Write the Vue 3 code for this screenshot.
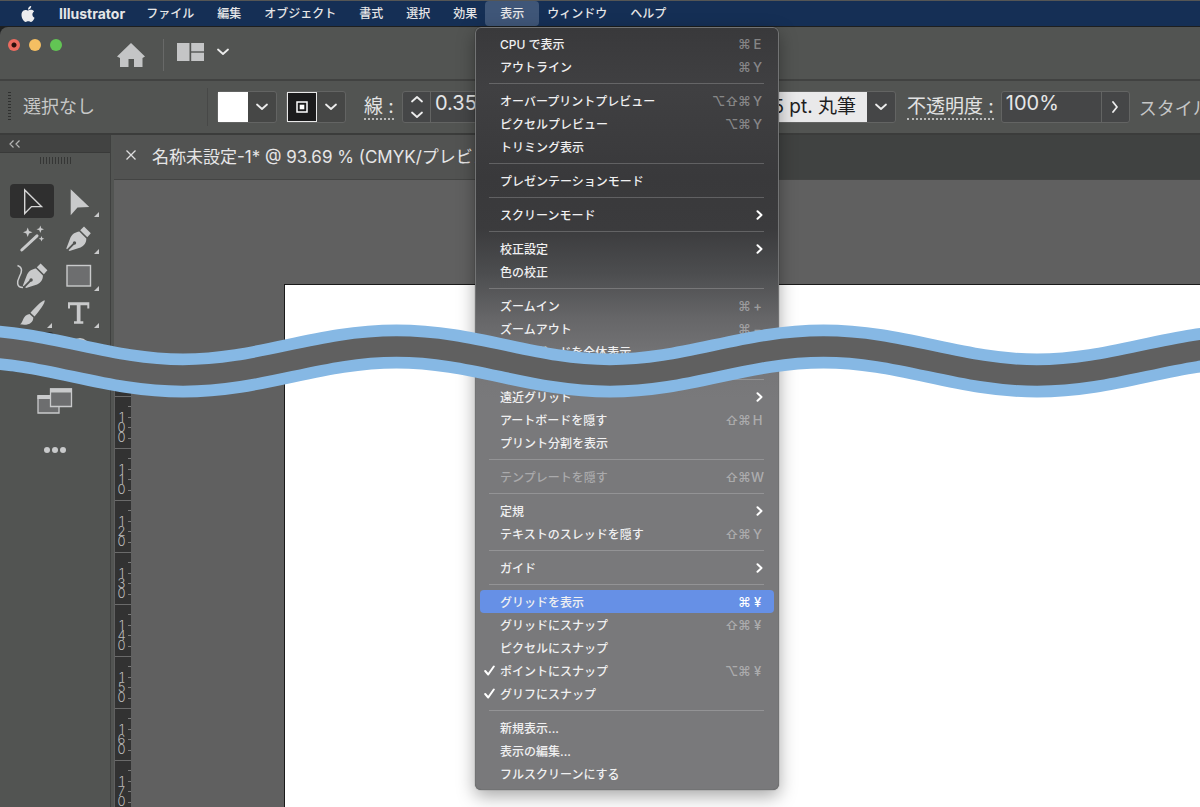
<script setup>
import { ref } from 'vue'

const menus = ['ファイル', '編集', 'オブジェクト', '書式', '選択', '効果', '表示', 'ウィンドウ', 'ヘルプ']

const groups = [
  [
    { label: 'CPU で表示', keys: '⌘E' },
    { label: 'アウトライン', keys: '⌘Y' },
  ],
  [
    { label: 'オーバープリントプレビュー', keys: '⌥⇧⌘Y' },
    { label: 'ピクセルプレビュー', keys: '⌥⌘Y' },
    { label: 'トリミング表示' },
  ],
  [{ label: 'プレゼンテーションモード' }],
  [{ label: 'スクリーンモード', sub: true }],
  [{ label: '校正設定', sub: true }, { label: '色の校正' }],
  [
    { label: 'ズームイン', keys: '⌘+' },
    { label: 'ズームアウト', keys: '⌘−' },
    { label: 'アートボードを全体表示', cut: true },
  ],
  [
    { label: '遠近グリッド', sub: true },
    { label: 'アートボードを隠す', keys: '⇧⌘H' },
    { label: 'プリント分割を表示' },
  ],
  [{ label: 'テンプレートを隠す', keys: '⇧⌘W', disabled: true }],
  [
    { label: '定規', sub: true },
    { label: 'テキストのスレッドを隠す', keys: '⇧⌘Y' },
  ],
  [{ label: 'ガイド', sub: true }],
  [
    { label: 'グリッドを表示', keys: '⌘¥', active: true },
    { label: 'グリッドにスナップ', keys: '⇧⌘¥' },
    { label: 'ピクセルにスナップ' },
    { label: 'ポイントにスナップ', keys: '⌥⌘¥', checked: true },
    { label: 'グリフにスナップ', checked: true },
  ],
  [{ label: '新規表示...' }, { label: '表示の編集...' }, { label: 'フルスクリーンにする' }],
]

const rulerMarks = ['100', '110', '120', '130', '140', '150', '160', '170']
const strokeWidth = ref('0.353 mm')
const opacity = ref('100%')
</script>

<template>
  <div class="app">
    <nav class="menubar" aria-label="メニューバー">
      <svg class="apple" viewBox="0 0 24 24" aria-hidden="true">
        <path d="M12.152 6.896c-.948 0-2.415-1.078-3.96-1.04-2.04.027-3.91 1.183-4.961 3.014-2.117 3.675-.546 9.103 1.519 12.09 1.013 1.454 2.208 3.09 3.792 3.039 1.52-.065 2.09-.987 3.935-.987 1.831 0 2.35.987 3.96.948 1.637-.026 2.676-1.48 3.676-2.948 1.156-1.688 1.636-3.325 1.662-3.415-.039-.013-3.182-1.221-3.22-4.857-.026-3.04 2.48-4.494 2.597-4.559-1.429-2.09-3.623-2.324-4.39-2.376-2-.156-3.675 1.09-4.61 1.09zM15.53 3.83c.843-1.012 1.4-2.427 1.245-3.83-1.207.052-2.662.805-3.532 1.818-.78.896-1.454 2.338-1.273 3.714 1.338.104 2.715-.688 3.559-1.701" />
      </svg>
      <button class="top-item app-name">Illustrator</button>
      <button v-for="m in menus" :key="m" class="top-item" :class="{ open: m === '表示' }">{{ m }}</button>
    </nav>

    <div class="window">
      <header class="titlebar">
        <div class="lights">
          <button class="light red" aria-label="閉じる"></button>
          <button class="light yellow" aria-label="しまう"></button>
          <button class="light green" aria-label="拡大"></button>
        </div>
        <button class="icon-btn home" aria-label="ホーム">
          <svg width="28" height="24" viewBox="0 0 28 24">
            <path fill="#c4c5c6" d="M14 0 28 13.500 25.500 15 25.500 24H17V16H11.500V24H3V15L0 13.500Z" />
          </svg>
        </button>
        <span class="title-rule"></span>
        <button class="icon-btn layout" aria-label="ワークスペース">
          <svg width="27" height="18" viewBox="0 0 27 18" fill="#c4c5c6">
            <rect width="12.500" height="18" /><rect x="14.200" width="12.800" height="8.300" /><rect x="14.200" y="9.700" width="12.800" height="8.300" />
          </svg>
          <svg width="12" height="8" viewBox="0 0 12 8" class="line"><path d="M1 1.500 6 6 11 1.500" /></svg>
        </button>
      </header>

      <section class="controls" aria-label="コントロール">
        <span class="grip"></span>
        <span class="status">選択なし</span>
        <span class="control-rule"></span>
        <button class="swatch" aria-label="塗り">
          <span class="chip fill"></span>
          <svg width="14" height="8" viewBox="0 0 14 8" class="line"><path d="M2 1.500 7 6 12 1.500" /></svg>
        </button>
        <button class="swatch second" aria-label="線の色">
          <span class="chip stroke">
            <svg width="12" height="12" viewBox="0 0 12 12"><rect x="1" y="1" width="10" height="10" fill="none" stroke="#fff" stroke-width="1.500" /><rect x="3.700" y="3.700" width="4.600" height="4.600" fill="#fff" /></svg>
          </span>
          <svg width="14" height="8" viewBox="0 0 14 8" class="line"><path d="M2 1.500 7 6 12 1.500" /></svg>
        </button>
        <label class="caption stroke-caption" for="stroke-width">線 :</label>
        <div class="field stroke-field">
          <button class="stepper" aria-label="増減">
            <svg width="14" height="24" viewBox="0 0 14 24" class="line"><path d="M2 6.500 7 2 12 6.500M2 17.500 7 22 12 17.500" /></svg>
          </button>
          <input id="stroke-width" v-model="strokeWidth" />
        </div>
        <div class="field brush-field">
          <select aria-label="ブラシ定義"><option>5 pt. 丸筆</option></select>
          <span class="field-arrow"><svg width="14" height="8" viewBox="0 0 14 8" class="line"><path d="M2 1.500 7 6 12 1.500" /></svg></span>
        </div>
        <label class="caption" for="opacity">不透明度 :</label>
        <div class="field opacity-field">
          <input id="opacity" v-model="opacity" />
          <button class="field-arrow" aria-label="不透明度を調整">
            <svg width="8" height="12" viewBox="0 0 8 12" class="line"><path d="M2 1 6 6 2 11" /></svg>
          </button>
        </div>
        <span class="style-label">スタイル :</span>
      </section>

      <div class="body">
        <aside class="tools" aria-label="ツール">
          <button class="collapse" aria-label="折りたたむ">
            <svg width="12" height="8" viewBox="0 0 12 8"><path d="M4.500.5 1 4 4.500 7.500M10.500.5 7 4 10.500 7.500" fill="none" stroke="#b4b5b4" stroke-width="1.200" /></svg>
          </button>
          <span class="panel-grip"></span>
          <div class="tool-grid">
            <button class="tool selected" aria-label="選択">
              <svg viewBox="0 0 44 34"><path d="M14.700 6V29.500L21.500 22.600H31.500Z" fill="none" stroke="#d6d6d6" stroke-width="1.400" /></svg>
            </button>
            <button class="tool" aria-label="ダイレクト選択">
              <svg viewBox="0 0 44 34"><path d="M13.700 5.300V31.300L20.500 23.500 32.300 23Z" /><path d="M42 28V33H37Z" /></svg>
            </button>
            <button class="tool" aria-label="自動選択">
              <svg viewBox="0 0 44 34">
                <path d="M11.800 29 27 14.800" stroke="#c9cacb" stroke-width="3" stroke-linecap="round" />
                <path d="M17.700 6.500 19 10 22.500 11.300 19 12.600 17.700 16 16.400 12.600 13 11.300 16.400 10ZM30.300 4.500 31.300 7.300 34 8.300 31.300 9.300 30.300 12 29.300 9.300 26.500 8.300 29.300 7.300ZM31.500 15 32.300 17 34.300 17.800 32.300 18.600 31.500 20.600 30.700 18.600 28.700 17.800 30.700 17Z" />
              </svg>
            </button>
            <button class="tool" aria-label="ペン">
              <svg viewBox="0 0 44 34">
                <path d="M27 5.500 33.800 12.200 30.300 16.200 23.200 9.300ZM22.300 10.500 29.300 17.500C29.500 21.500 27 25 23.500 26.500L12.500 30 11.600 29.200 17.500 23.300 16.200 22 10 28.300 9.300 27.500 13.500 16.500C15.500 12.500 18.500 11.300 22.300 10.500Z" /><circle cx="17.500" cy="22" r="1.700" fill="#525452" /><path d="M42 28V33H37Z" />
              </svg>
            </button>
            <button class="tool" aria-label="曲線">
              <svg viewBox="0 0 44 34">
                <path transform="translate(3.600)" d="M27 5.500 33.800 12.200 30.300 16.200 23.200 9.300ZM22.300 10.500 29.300 17.500C29.500 21.500 27 25 23.500 26.500L12.500 30 11.600 29.200 17.500 23.300 16.200 22 10 28.300 9.300 27.500 13.500 16.500C15.500 12.500 18.500 11.300 22.300 10.500Z" /><circle cx="21.100" cy="22" r="1.700" fill="#525452" />
                <path d="M7.500 7.500C13 9.500 12 14 9.500 18.500 7 23.500 6 29.500 13 29.500" fill="none" stroke="#c9cacb" stroke-width="1.500" />
              </svg>
            </button>
            <button class="tool" aria-label="長方形">
              <svg viewBox="0 0 44 34"><rect x="10" y="7.500" width="23.500" height="20.500" fill="#6d6e6f" stroke="#c9cacb" stroke-width="1.400" /><path d="M42 28V33H37Z" /></svg>
            </button>
            <button class="tool" aria-label="ブラシ">
              <svg viewBox="0 0 44 34"><path d="M34.700 5.300C35.400 8 29 16.500 24.500 21.500L20.500 17.800C25 12.500 31.500 6 34.700 5.300ZM19.500 19 23.300 22.500C23.500 28 18 31 10 29.300 13.500 27.500 12.500 20 19.500 19Z" /><path d="M42 28V33H37Z" /></svg>
            </button>
            <button class="tool" aria-label="文字">
              <svg viewBox="0 0 44 34"><path d="M11 7.300H32.300V13.500H30.300V10.300H23.500V26.200H26.300V28.700H17V26.200H19.800V10.300H13V13.500H11Z" /><path d="M42 28V33H37Z" /></svg>
            </button>
            <button class="tool selected low" aria-label="塗りと線"></button>
            <button class="tool" aria-label="回転">
              <svg viewBox="0 0 44 34"><circle cx="23" cy="15" r="9" /></svg>
            </button>
          </div>
          <button class="icon-btn screen" aria-label="スクリーンモード">
            <svg width="36" height="26" viewBox="0 0 36 26">
              <path d="M1 8H22V25H1Z" fill="#6d6e6f" stroke="#c9cacb" stroke-width="1.300" /><path d="M.4 7H13V11H.4Z" fill="#c9cacb" />
              <path d="M13.500 1H34.500V18.500H13.500Z" fill="#6d6e6f" stroke="#c9cacb" stroke-width="1.300" /><path d="M13 .4H35V4.500H13Z" fill="#c9cacb" />
            </svg>
          </button>
          <button class="icon-btn more" aria-label="ツールバーを編集">
            <svg width="22" height="6" viewBox="0 0 22 6" fill="#c9cacb"><circle cx="3" cy="3" r="3" /><circle cx="11" cy="3" r="3" /><circle cx="19" cy="3" r="3" /></svg>
          </button>
        </aside>

        <main class="document">
          <div class="tabs">
            <div class="tab">
              <button class="icon-btn" aria-label="タブを閉じる">
                <svg width="10" height="10" viewBox="0 0 10 10"><path d="M.5.5 9.500 9.500M9.500.5.5 9.500" stroke="#dededf" stroke-width="1.300" /></svg>
              </button>
              <span>名称未設定-1* @ 93.69 % (CMYK/プレビュー)</span>
            </div>
          </div>
          <div class="canvas">
            <div class="ruler">
              <div v-for="mark in rulerMarks" :key="mark" class="mark">
                <span class="digits">{{ mark }}</span>
                <span class="ticks"><i v-for="n in 4" :key="n"></i></span>
              </div>
            </div>
            <div class="artboard"></div>
          </div>
        </main>
      </div>
    </div>

    <div class="dropdown" role="menu" aria-label="表示">
      <div v-for="(group, gi) in groups" :key="gi" class="group">
        <button
          v-for="item in group"
          :key="item.label"
          class="item"
          role="menuitem"
          :class="{ active: item.active, cut: item.cut }"
          :disabled="item.disabled"
        >
          <span class="check">
            <svg v-if="item.checked" width="11" height="11" viewBox="0 0 11 11"><path d="M1.200 6 4.200 9.500 9.800 1.500" fill="none" stroke="#fff" stroke-width="2" stroke-linecap="round" stroke-linejoin="round" /></svg>
          </span>
          <span class="label">{{ item.label }}</span>
          <span v-if="item.keys" class="keys"><kbd v-for="k in item.keys" :key="k">{{ k }}</kbd></span>
          <svg v-if="item.sub" class="arrow" width="7" height="10" viewBox="0 0 7 10"><path d="M1.500 1.200 5.500 5 1.500 8.800" fill="none" stroke="#fff" stroke-width="2" stroke-linecap="round" stroke-linejoin="round" /></svg>
        </button>
      </div>
    </div>

    <svg class="wave" viewBox="0 0 1200 80" preserveAspectRatio="none" aria-hidden="true">
      <g fill="none">
        <path stroke="#86b8e4" stroke-width="44" d="M-30 26.500C48 26.500 105 55.500 183 55.500S318 26.500 396.500 26.500 532 55.500 610 55.500 745 26.500 823.500 26.500 959 55.500 1037 55.500 1172 26.500 1250 26.500" />
        <path stroke="#606060" stroke-width="20.500" d="M-30 26.500C48 26.500 105 55.500 183 55.500S318 26.500 396.500 26.500 532 55.500 610 55.500 745 26.500 823.500 26.500 959 55.500 1037 55.500 1172 26.500 1250 26.500" />
      </g>
    </svg>
  </div>
</template>

<style>
body {
  margin: 0;
  background: #525452;
}
</style>

<style scoped>
.app {
  position: relative;
  display: flex;
  flex-direction: column;
  height: 100vh;
  overflow: hidden;
  box-sizing: border-box;
  border-top: 1px solid #555655;
  background: #1d1f20;
  color: #e6e6e7;
  font-family: Inter, "Noto Sans CJK JP", sans-serif;
  font-size: 18px;
}
.app * {
  box-sizing: border-box;
}
button,
input,
select {
  margin: 0;
  padding: 0;
  border: 0;
  background: none;
  color: inherit;
  font: inherit;
}
svg {
  display: block;
  flex: none;
}
.line {
  fill: none;
  stroke: #ececec;
  stroke-width: 1.8;
  stroke-linecap: round;
  stroke-linejoin: round;
}

/* menu bar */
.menubar {
  display: flex;
  flex: none;
  align-items: center;
  gap: 23px;
  height: 25px;
  padding-left: 20px;
  background: #152f55;
  white-space: nowrap;
}
.apple {
  width: 16px;
  height: 16px;
  fill: #ececee;
}
.top-item {
  height: 25px;
  font-size: 12px;
  font-weight: 500;
  line-height: 24px;
}
.app-name {
  margin-right: -2px;
  font-size: 14px;
  font-weight: 700;
}
.top-item.open {
  margin: 0 -15px;
  padding: 0 15px;
  border-radius: 4px;
  background: #3f5678;
}

/* window frame */
.window {
  display: flex;
  flex: 1;
  flex-direction: column;
  min-height: 0;
  margin-top: 1px;
  border-top-left-radius: 8px;
  background: #525452;
}
.titlebar {
  display: flex;
  flex: none;
  align-items: flex-start;
  height: 54px;
  padding: 12px 8px 0;
  border-bottom: 2px solid #414241;
}
.lights {
  display: flex;
  gap: 9px;
}
.light {
  width: 12px;
  height: 12px;
  border-radius: 50%;
}
.red {
  background: radial-gradient(circle, #2b0f0c 2px, #ed6b5f 3px);
}
.yellow {
  background: #f5bf62;
}
.green {
  background: #62c554;
}
.home {
  margin: 4px 18px 0 55px;
}
.title-rule {
  width: 1px;
  height: 32px;
  margin-right: 13px;
  background: #686968;
}
.layout {
  display: flex;
  align-items: center;
  gap: 13px;
  margin-top: 4px;
}

/* control strip */
.controls {
  display: flex;
  flex: none;
  align-items: center;
  height: 54px;
  padding: 0 0 1px 8px;
  border-bottom: 2px solid #3b3c3b;
  white-space: nowrap;
}
.controls > * {
  flex: none;
}
.grip {
  width: 3px;
  height: 30px;
  margin-right: 12px;
  background: repeating-linear-gradient(#2f302f 0 1px, #525452 1px 3px);
}
.status {
  width: 184px;
  padding-bottom: 3px;
  color: #c6c7c7;
}
.control-rule {
  width: 1px;
  height: 38px;
  margin-right: 9px;
  background: #474847;
}
.swatch {
  display: flex;
  align-items: center;
  gap: 7px;
  width: 60px;
  height: 32px;
  border: 1px solid #636463;
  border-radius: 3px;
  background: #464746;
}
.second {
  margin-left: 9px;
}
.chip {
  display: grid;
  place-items: center;
  width: 30px;
  height: 30px;
}
.fill {
  background: #fff;
}
.stroke {
  border: 1px solid #e8e8e8;
  background: #1b1b1c;
}
.caption {
  height: 26px;
  border-bottom: 2px dotted #b9baba;
  color: #e2e3e3;
  font-size: 19px;
  line-height: 26px;
}
.stroke-caption {
  width: 30px;
  margin: 0 8px 0 18px;
}
.field {
  display: flex;
  height: 32px;
  border: 1px solid #636463;
  border-radius: 3px;
  background: #454647;
  overflow: hidden;
}
.field input {
  flex: 1;
  min-width: 0;
  padding: 0 4px 8px;
  font-size: 20px;
}
.stroke-field {
  width: 150px;
}
.stepper {
  display: grid;
  place-items: center;
  width: 28px;
  border-right: 1px solid #636463;
}
.brush-field {
  width: 176px;
  margin: 0 11px 0 168px;
}
.brush-field select {
  flex: 1;
  min-width: 0;
  padding-right: 11px;
  appearance: none;
  background: #e9e9ea;
  color: #1e1e1f;
  font-size: 19px;
  text-align: right;
}
.field-arrow {
  display: grid;
  place-items: center;
  width: 28px;
}
.opacity-field {
  width: 129px;
  margin: 0 9px 0 7px;
}
.opacity-field .field-arrow {
  border-left: 1px solid #636463;
}
.style-label {
  color: #c6c7c7;
}

/* tool panel */
.body {
  display: flex;
  flex: 1;
  min-height: 0;
}
.tools {
  display: flex;
  flex: none;
  flex-direction: column;
  align-items: center;
  width: 111px;
  border-right: 1px solid #3f403f;
}
.collapse {
  display: flex;
  align-items: center;
  align-self: stretch;
  height: 18px;
  padding-left: 9px;
  border-bottom: 1px solid #393a39;
  background: #424342;
}
.panel-grip {
  width: 31px;
  height: 7px;
  margin: 4px 0 20px;
  background: repeating-linear-gradient(90deg, #353635 0 1px, #525452 1px 3px);
}
.tool-grid {
  display: grid;
  grid-template-columns: 44px 44px;
  gap: 3px;
}
.tool {
  height: 34px;
  border-radius: 4px;
}
.tool svg {
  width: 44px;
  height: 34px;
  fill: #c9cacb;
}
.selected {
  background: #2f2f2f;
}
.low {
  height: 40px;
}
.screen {
  margin-top: 16px;
}
.more {
  margin-top: 33px;
}

/* document */
.document {
  display: flex;
  flex: 1;
  flex-direction: column;
  min-width: 0;
  margin-left: 3px;
}
.tabs {
  display: flex;
  flex: none;
  height: 45px;
  border-bottom: 1px solid #434443;
  background: #404241;
}
.tab {
  display: flex;
  align-items: center;
  gap: 16px;
  width: 460px;
  padding: 0 0 4px 12px;
  background: #525352;
  font-size: 17px;
  white-space: nowrap;
}
.canvas {
  display: flex;
  flex: 1;
  min-height: 0;
  padding-left: 1px;
  background: #606060;
}
.ruler {
  width: 16px;
  margin-top: 210px;
  padding-top: 6px;
  background: #323232;
  overflow: hidden;
}
.mark {
  display: flex;
  justify-content: space-between;
  height: 52px;
  border-top: 1px solid #6b6b6b;
}
.digits {
  width: 11px;
  padding: 15px 0 0 2px;
  color: #b8b8b8;
  font-size: 13px;
  font-weight: 300;
  line-height: 10px;
  text-align: center;
  word-break: break-all;
}
.ticks {
  display: flex;
  flex-direction: column;
  justify-content: space-evenly;
  width: 3px;
}
.ticks i {
  height: 1px;
  background: #7a7a7a;
}
.artboard {
  flex: 1;
  margin: 104px 0 0 153px;
  border-top: 1px solid #1a1a1a;
  border-left: 1px solid #1a1a1a;
  background: #fff;
}

/* dropdown over the window */
.dropdown {
  position: absolute;
  top: 26px;
  left: 475px;
  z-index: 1;
  width: 304px;
  padding: 4px;
  border: 1px solid rgba(255, 255, 255, 0.16);
  border-radius: 6px;
  background: linear-gradient(#39393b 0, #404042 60px, #39393b 150px, #3b3b3d 200px, #4c4d4f 245px, #666668 290px, #757577 330px, #79797b 370px) padding-box, #58595a;
  box-shadow: 0 0 1px rgba(0, 0, 0, 0.7), 0 6px 18px rgba(0, 0, 0, 0.35);
}
.group + .group::before {
  content: "";
  display: block;
  height: 1px;
  margin: 5px 10px 5px 9px;
  background: rgba(255, 255, 255, 0.2);
}
.item {
  display: flex;
  align-items: center;
  width: 100%;
  height: 23px;
  padding: 0 8px 0 4px;
  border-radius: 4px;
  color: #f0f0f1;
  font-size: 12px;
  font-weight: 500;
  text-align: left;
  white-space: nowrap;
}
.item.active {
  background: #6690e6;
}
.item.cut {
  margin-bottom: 16px;
}
.item:disabled {
  color: #aaaaac;
}
.check {
  width: 16px;
}
.label {
  flex: 1;
}
.keys {
  display: flex;
  margin-right: 2px;
  color: rgba(255, 255, 255, 0.4);
}
.active .keys {
  color: #fff;
}
kbd {
  width: 13px;
  font-family: Inter, "DejaVu Sans", sans-serif;
  font-size: 13px;
  text-align: center;
}
.arrow {
  margin-right: 3px;
}

/* wavy cut across the picture */
.wave {
  position: absolute;
  top: 319px;
  left: 0;
  z-index: 2;
  width: 100%;
  height: 80px;
}
</style>
